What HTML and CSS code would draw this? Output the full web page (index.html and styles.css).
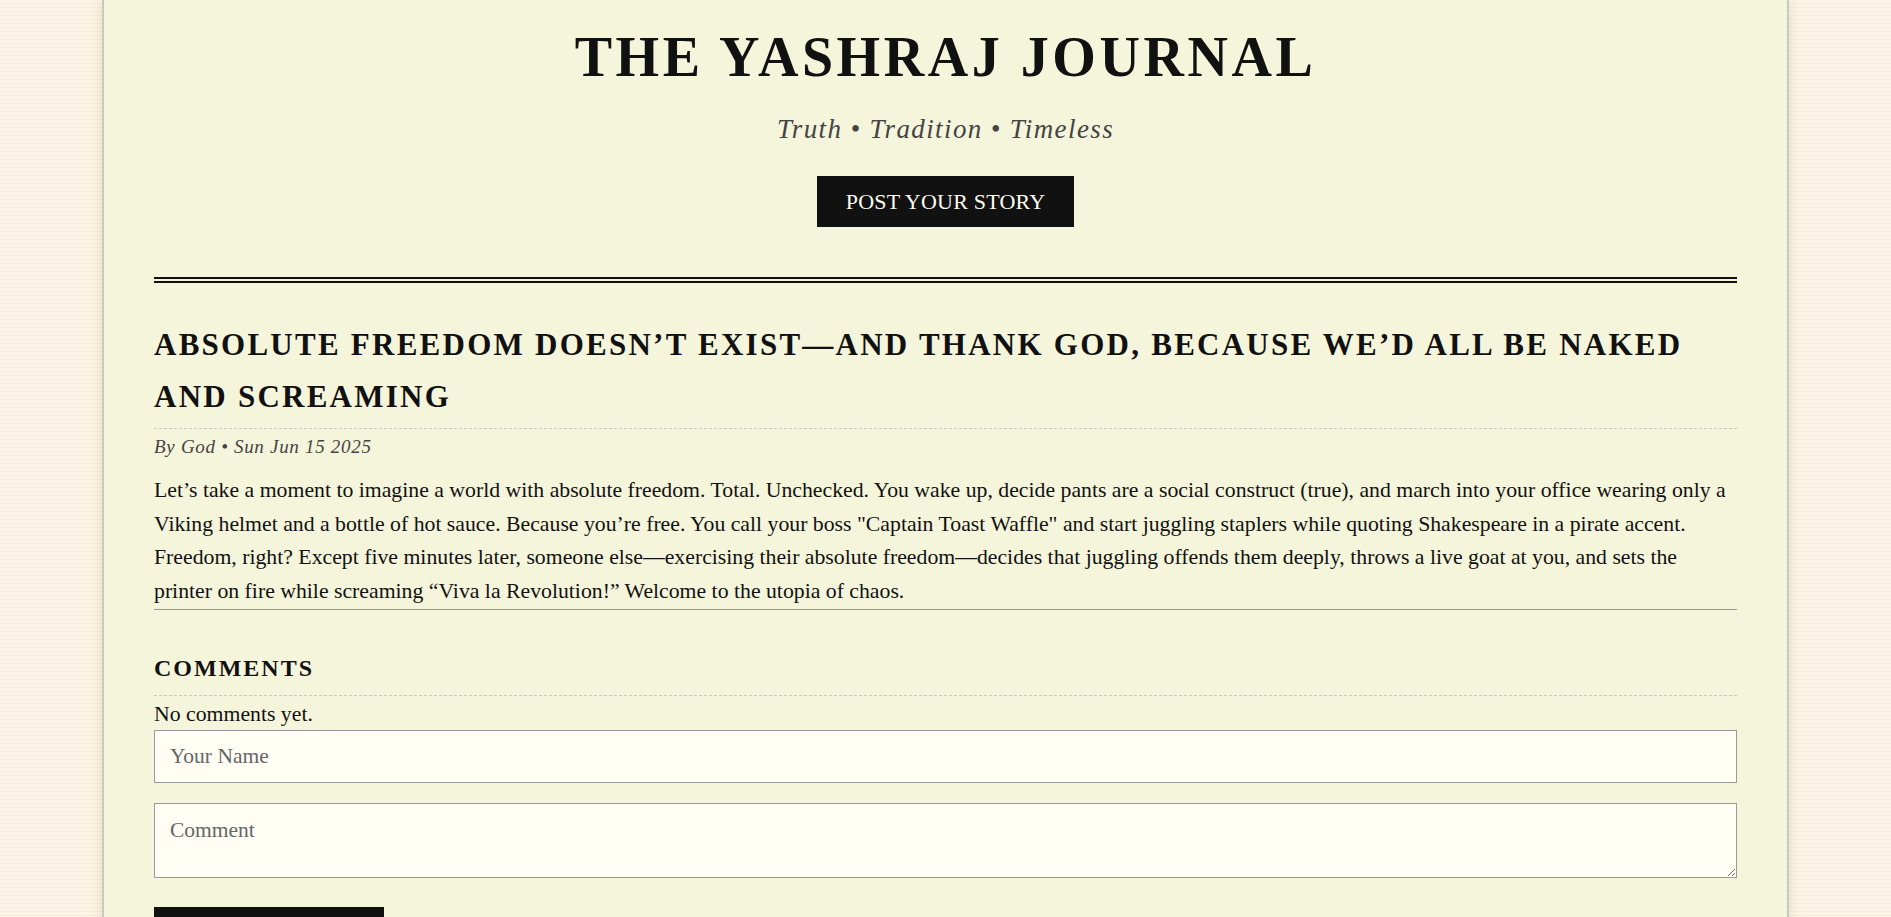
FILE: index.html
```html
<!DOCTYPE html>
<html lang="en">
<head>
<meta charset="utf-8">
<title>The Yashraj Journal</title>
<link rel="stylesheet" href="styles.css">
</head>
<body>
<div class="page">
  <header class="masthead">
    <h1 class="masthead-title">The Yashraj Journal</h1>
    <p class="tagline">Truth • Tradition • Timeless</p>
    <button class="btn btn-post" type="button">Post Your Story</button>
  </header>

  <article class="story">
    <h2 class="story-title">Absolute freedom doesn’t exist—and thank God, because we’d all be naked and screaming</h2>
    <div class="story-meta">By God • Sun Jun 15 2025</div>
    <p class="story-body">Let’s take a moment to imagine a world with absolute freedom. Total. Unchecked. You wake up, decide pants are a social construct (true), and march into your office wearing only a Viking helmet and a bottle of hot sauce. Because you’re free. You call your boss "Captain Toast Waffle" and start juggling staplers while quoting Shakespeare in a pirate accent. Freedom, right? Except five minutes later, someone else—exercising their absolute freedom—decides that juggling offends them deeply, throws a live goat at you, and sets the printer on fire while screaming “Viva la Revolution!” Welcome to the utopia of chaos.</p>
  </article>

  <section class="comments">
    <h3 class="comments-title">Comments</h3>
    <p class="comments-empty">No comments yet.</p>
    <form class="comment-form">
      <input class="field field-name" type="text" placeholder="Your Name">
      <textarea class="field field-comment" placeholder="Comment"></textarea>
      <button class="btn btn-submit" type="button">Post Comment</button>
    </form>
  </section>
</div>
</body>
</html>
```

FILE: styles.css
```css
html, body {
  margin: 0;
  padding: 0;
}

body {
  font-family: "Liberation Serif", "Times New Roman", serif;
  color: #111;
  background-color: #fdf5e4;
  background-image: repeating-linear-gradient(to bottom, #fdf6e6 0, #fdf6e6 3px, #f8eed6 3px, #f8eed6 4px);
}

.page {
  box-sizing: border-box;
  width: 1687px;
  min-height: 100vh;
  margin: 0 auto;
  padding: 0 50px 60px;
  background: #f5f5dc;
  border-left: 2px solid #c9c9c3;
  border-right: 2px solid #c9c9c3;
  box-shadow: 0 0 14px rgba(120, 100, 60, 0.18);
}

/* ---------- masthead ---------- */
.masthead {
  display: flex;
  flex-direction: column;
  align-items: center;
  padding: 25px 0 50px;
  border-bottom: 6px double #111;
}

.masthead-title {
  margin: 0;
  font-size: 56px;
  line-height: 64px;
  font-weight: 700;
  letter-spacing: 3.55px;
  text-transform: uppercase;
  color: #111;
}

.tagline {
  margin: 24px 0 0;
  font-size: 27px;
  line-height: 32px;
  font-style: italic;
  letter-spacing: 1.4px;
  color: #444;
}

.btn {
  font-family: inherit;
  border: none;
  background: #111;
  color: #fdfbef;
  text-transform: uppercase;
  cursor: pointer;
}

.btn-post {
  margin-top: 31px;
  height: 51px;
  padding: 0 29px;
  font-size: 22px;
  line-height: 27px;
  letter-spacing: 0.2px;
}

/* ---------- story ---------- */
.story {
  padding-bottom: 1px;
  border-bottom: 1px solid #999;
}

.story-title {
  margin: 36px 0 0;
  padding-bottom: 5px;
  border-bottom: 1px dashed #c8c8c0;
  font-size: 31px;
  line-height: 52px;
  font-weight: 700;
  letter-spacing: 2.25px;
  text-transform: uppercase;
  color: #111;
}

.story-meta {
  margin-top: 6px;
  font-size: 19px;
  line-height: 24px;
  font-style: italic;
  letter-spacing: 0.7px;
  color: #444;
}

.story-body {
  margin: 15px 0 0;
  font-size: 21.75px;
  line-height: 33.6px;
  color: #111;
}

/* ---------- comments ---------- */
.comments-title {
  margin: 43px 0 0;
  padding-bottom: 12px;
  border-bottom: 1px dashed #c8c8c0;
  font-size: 24px;
  line-height: 30px;
  font-weight: 700;
  letter-spacing: 2px;
  text-transform: uppercase;
}

.comments-empty {
  margin: 6px 0 0;
  font-size: 21.75px;
  line-height: 24px;
}

.comment-form {
  display: flex;
  flex-direction: column;
  align-items: flex-start;
  margin-top: 4px;
}

.field {
  box-sizing: border-box;
  width: 100%;
  margin: 0;
  font-family: inherit;
  font-size: 21.5px;
  color: #111;
  background: #fffdf4;
  border: 1px solid #9a9a9a;
  border-radius: 0;
  outline: none;
}

.field::placeholder {
  color: #666;
}

.field-name {
  height: 53px;
  padding: 0 15px;
}

.field-comment {
  height: 75px;
  margin-top: 20px;
  padding: 14px 15px;
  line-height: 24px;
  resize: vertical;
}

.btn-submit {
  margin-top: 29px;
  width: 230px;
  height: 51px;
  font-size: 22px;
  line-height: 27px;
}
```
